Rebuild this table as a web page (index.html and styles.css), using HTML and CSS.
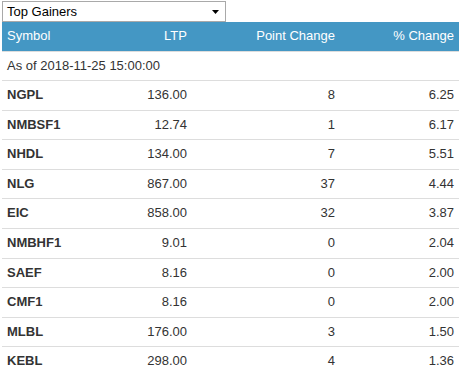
FILE: index.html
```html
<!DOCTYPE html>
<html>
<head>
<meta charset="utf-8">
<link rel="stylesheet" href="styles.css">
</head>
<body>
<div class="wrap">
  <div class="select">
    <span class="select-label">Top Gainers</span>
    <svg class="select-arrow" width="7" height="4" viewBox="0 0 7 4"><path d="M0 0H7L3.5 4Z" fill="#000"/></svg>
  </div>
  <table class="grid">
    <colgroup>
      <col class="c1"><col class="c2"><col class="c3"><col class="c4">
    </colgroup>
    <thead>
      <tr><th class="left">Symbol</th><th>LTP</th><th>Point Change</th><th>% Change</th></tr>
    </thead>
    <tbody>
      <tr><td class="left asof" colspan="4">As of 2018-11-25 15:00:00</td></tr>
      <tr><td class="sym">NGPL</td><td>136.00</td><td>8</td><td>6.25</td></tr>
      <tr><td class="sym">NMBSF1</td><td>12.74</td><td>1</td><td>6.17</td></tr>
      <tr><td class="sym">NHDL</td><td>134.00</td><td>7</td><td>5.51</td></tr>
      <tr><td class="sym">NLG</td><td>867.00</td><td>37</td><td>4.44</td></tr>
      <tr><td class="sym">EIC</td><td>858.00</td><td>32</td><td>3.87</td></tr>
      <tr><td class="sym">NMBHF1</td><td>9.01</td><td>0</td><td>2.04</td></tr>
      <tr><td class="sym">SAEF</td><td>8.16</td><td>0</td><td>2.00</td></tr>
      <tr><td class="sym">CMF1</td><td>8.16</td><td>0</td><td>2.00</td></tr>
      <tr><td class="sym">MLBL</td><td>176.00</td><td>3</td><td>1.50</td></tr>
      <tr><td class="sym">KEBL</td><td>298.00</td><td>4</td><td>1.36</td></tr>
    </tbody>
  </table>
</div>
</body>
</html>
```
FILE: styles.css
```css
html, body {
  margin: 0;
  padding: 0;
  background: #fff;
}
.wrap {
  padding: 1px 3px 0 2px;
  font-family: "Liberation Sans", Arial, sans-serif;
  font-size: 13px;
  color: #333;
}
.select {
  box-sizing: border-box;
  width: 224px;
  height: 21px;
  border: 1px solid #a9a9a9;
  display: flex;
  align-items: center;
  justify-content: space-between;
  padding: 0 6px 0 4px;
  color: #000;
  font-size: 13px;
  background: #fff;
}
.select-arrow {
  display: block;
}
.grid {
  width: 457px;
  border-collapse: collapse;
  table-layout: fixed;
}
.c1 { width: 95px; }
.c2 { width: 95px; }
.c3 { width: 148px; }
.c4 { width: 119px; }
.grid th {
  background: #4497c4;
  color: #fff;
  font-weight: normal;
  text-align: right;
  line-height: 1.42857;
  padding: 5px;
}
.grid td {
  text-align: right;
  line-height: 1.42857;
  padding: 5px;
  border-top: 1px solid #ddd;
  white-space: nowrap;
}
.grid .left {
  text-align: left;
}
.grid .sym {
  text-align: left;
  font-weight: bold;
}
```
